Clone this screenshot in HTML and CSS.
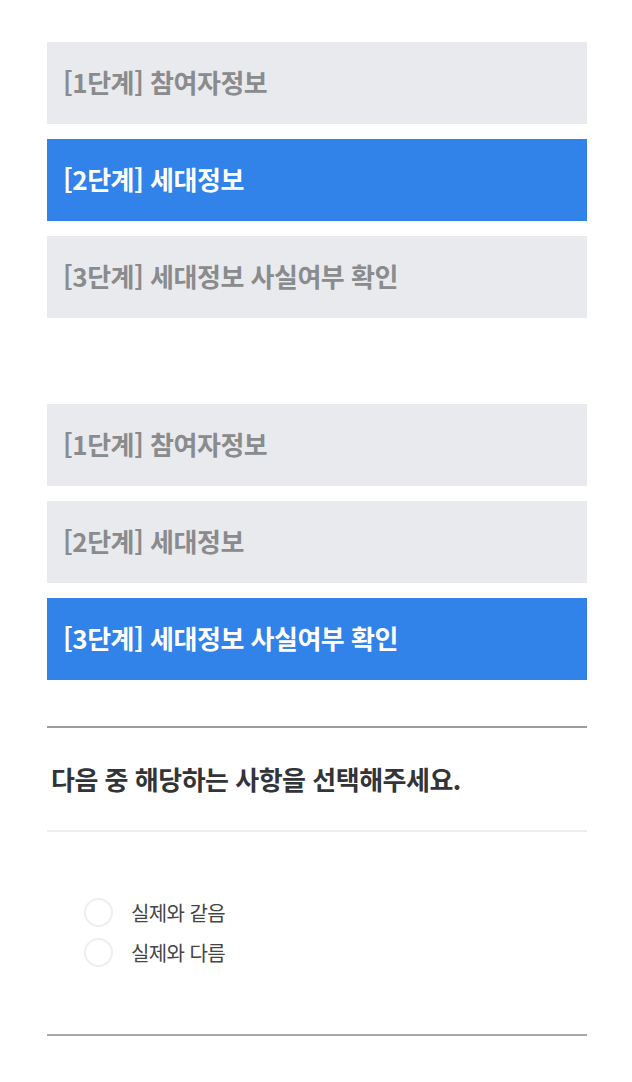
FILE: index.html
```html
<!DOCTYPE html>
<html lang="ko">
<head>
<meta charset="utf-8">
<link rel="stylesheet" href="styles.css">
</head>
<body>
<div class="page">
  <div class="steps">
    <div class="step">[1단계] 참여자정보</div>
    <div class="step active">[2단계] 세대정보</div>
    <div class="step">[3단계] 세대정보 사실여부 확인</div>
  </div>
  <div class="steps second">
    <div class="step">[1단계] 참여자정보</div>
    <div class="step">[2단계] 세대정보</div>
    <div class="step active">[3단계] 세대정보 사실여부 확인</div>
  </div>
  <div class="question">
    <h2 class="q-title">다음 중 해당하는 사항을 선택해주세요.</h2>
    <div class="options">
      <label class="option"><span class="radio"></span><span class="opt-text">실제와 같음</span></label>
      <label class="option"><span class="radio"></span><span class="opt-text">실제와 다름</span></label>
    </div>
  </div>
</div>
</body>
</html>
```
FILE: styles.css
```css
* { box-sizing: border-box; }
html, body { margin: 0; padding: 0; background: #fff; }
body { font-family: "Noto Sans CJK KR", "Noto Sans", sans-serif; }
.page { width: 540px; margin-left: 47px; padding-top: 42px; }
.steps { display: flex; flex-direction: column; gap: 15px; }
.steps.second { margin-top: 86px; }
.step {
  height: 82px;
  display: flex;
  align-items: center;
  padding-left: 16px;
  padding-bottom: 3px;
  background: #e9eaed;
  color: #8a8b8d;
  font-size: 26px;
  font-weight: 700;
  letter-spacing: -0.5px;
}
.step.active { background: #3182e9; color: #fff; }
.question { margin-top: 46px; border-top: 2px solid #9a9c9e; border-bottom: 2px solid #a6a8aa; }
.q-title {
  margin: 0;
  height: 104px;
  display: flex;
  align-items: center;
  padding-left: 4px;
  padding-bottom: 2px;
  font-size: 26px;
  font-weight: 700;
  color: #333438;
  letter-spacing: -0.5px;
  border-bottom: 2px solid #eeeeef;
}
.options { display: flex; flex-direction: column; gap: 11px; padding: 66px 0 67px 37px; }
.option { display: flex; align-items: center; height: 29px; }
.radio { width: 29px; height: 29px; border: 2px solid #eeeeee; border-radius: 50%; }
.opt-text { margin-left: 18px; font-size: 20px; color: #444; letter-spacing: -0.6px; }
```
